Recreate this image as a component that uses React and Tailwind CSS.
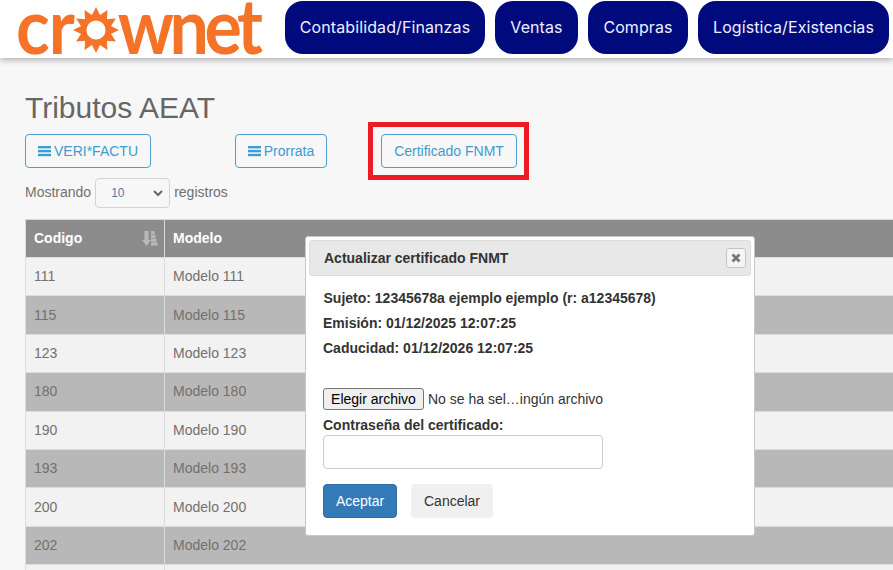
import React from "react";

const sans = { fontFamily: '"Liberation Sans", Arial, sans-serif' };

function Bars() {
  return (
    <svg width="13" height="12" viewBox="0 0 13 12" className="shrink-0">
      <rect x="0" y="1" width="13" height="2.4" fill="currentColor" />
      <rect x="0" y="4.9" width="13" height="2.4" fill="currentColor" />
      <rect x="0" y="8.8" width="13" height="2.4" fill="currentColor" />
    </svg>
  );
}

function Sun() {
  const rays = [];
  for (let i = 0; i < 12; i++) {
    rays.push(<polygon key={i} points="-5,-14 0,-24 5,-14" fill="#f47328" transform={`rotate(${i * 30})`} />);
  }
  return (
    <svg width="46" height="48" viewBox="-24 -25 48 50" className="shrink-0">
      {rays}
      <circle r="12.5" fill="none" stroke="#f47328" strokeWidth="5" />
    </svg>
  );
}

function SortIcon() {
  return (
    <svg width="16" height="15" viewBox="0 0 16 15">
      <path d="M2.500 0h4v9h2.500l-4.500 6L0 9h2.500z" fill="#b8b8b8" />
      <rect x="9" y="0" width="3.500" height="3.200" fill="#b8b8b8" />
      <rect x="9" y="3.800" width="4.500" height="3.200" fill="#b8b8b8" />
      <rect x="9" y="7.600" width="5.500" height="3.200" fill="#b8b8b8" />
      <rect x="9" y="11.400" width="6.500" height="3.200" fill="#b8b8b8" />
    </svg>
  );
}

const nav = [
  ["Contabilidad/Finanzas", "w-[200px]"],
  ["Ventas", "w-[83px]"],
  ["Compras", "w-[100px]"],
  ["Logística/Existencias", "w-[191px]"],
];

const rows = [
  ["111", "Modelo 111"],
  ["115", "Modelo 115"],
  ["123", "Modelo 123"],
  ["180", "Modelo 180"],
  ["190", "Modelo 190"],
  ["193", "Modelo 193"],
  ["200", "Modelo 200"],
  ["202", "Modelo 202"],
  ["", ""],
];

export default function App() {
  return (
    <div className="relative w-[893px] h-[570px] overflow-hidden bg-[#f7f7f7] text-[14px] text-[#73706e]" style={sans}>
      <header className="h-[58px] bg-white flex items-start shadow-[0_2px_6px_rgba(0,0,0,0.3)]">
        <div className="w-[285px] h-[58px] pl-[16px] flex items-start text-[#f47328] font-bold" style={{ fontFamily: 'Lato, sans-serif' }}>
          <span className="mt-[6px] text-[70px] leading-[40px] tracking-[-1px] scale-y-[1.09] origin-bottom">cr</span>
          <span className="mt-[6px] shrink-0 -ml-[1px] -mr-[1px]"><Sun /></span>
          <span className="mt-[6px] text-[70px] leading-[40px] tracking-[-4.5px] scale-y-[1.09] origin-bottom">wnet</span>
        </div>
        <nav className="flex gap-[10px] pt-[1px]">
          {nav.map(([t, w]) => (
            <div key={t} className={`${w} h-[53px] pb-[2px] rounded-[18px] bg-[#000a7d] text-[#eef0ff] flex items-center justify-center text-[16px] tracking-[0.1px] whitespace-nowrap`} style={{ fontFamily: 'Inter, sans-serif' }}>
              {t}
            </div>
          ))}
        </nav>
      </header>

      <main className="pl-[25px]">
        <h1 className="text-[30px] leading-[33px] text-[#666] mt-[33px] font-normal">Tributos AEAT</h1>
        <div className="flex mt-[10px] text-[#3f9ccf]">
          <button className="w-[126px] h-[34px] border border-[#4a9fd0] rounded-[4px] flex items-center justify-center gap-[3px]"><Bars />VERI*FACTU</button>
          <button className="ml-[84px] w-[92px] h-[34px] border border-[#4a9fd0] rounded-[4px] flex items-center justify-center gap-[3px]"><Bars />Prorrata</button>
          <button className="ml-[54px] w-[136px] h-[34px] border border-[#4a9fd0] rounded-[4px] flex items-center justify-center">Certificado FNMT</button>
        </div>
        <div className="flex items-center mt-[10px] h-[30px]">
          <span className="-mt-[1px]">Mostrando</span>
          <div className="ml-[4px] w-[75px] h-[30px] border border-[#d4d4d4] rounded-[4px] flex items-center justify-between pl-[15px] pr-[6px] text-[12px] text-[#4a80a8]">
            <span>10</span>
            <svg width="10" height="7" viewBox="0 0 10 7"><path d="M1 1l4 4 4-4" fill="none" stroke="#666" strokeWidth="2" /></svg>
          </div>
          <span className="ml-[4px] -mt-[1px]">registros</span>
        </div>
        <div className="mt-[11px] w-[868px]">
          <div className="h-[38px] bg-[#8c8c8c] border-t border-l border-[#d9d9d9] text-white font-bold flex">
            <div className="w-[139px] pl-[8px] pr-[6px] flex items-center justify-between border-r border-[#d9d9d9]">
              <span>Codigo</span><SortIcon />
            </div>
            <div className="pl-[8px] flex items-center">Modelo</div>
          </div>
          {rows.map(([a, b], i) => (
            <div key={i} className={`h-[38.4px] flex items-center border-l border-t border-[#dcdcdc] ${i % 2 ? "bg-[#b8b8b8]" : "bg-[#f2f2f2]"}`}>
              <div className="w-[139px] h-full pl-[8px] flex items-center border-r border-[#dcdcdc]">{a}</div>
              <div className="pl-[8px]">{b}</div>
            </div>
          ))}
        </div>
      </main>

      <div className="absolute left-[368px] top-[122px] w-[161px] h-[58px] border-[5px] border-[#ed1c24]"></div>

      <div className="absolute left-[305px] top-[236px] w-[450px] h-[300px] bg-white border border-[#c8c8c8] rounded-[3px] p-[3px] text-[#333]">
        <div className="h-[36px] bg-[#e8e8e8] border border-[#dddddd] rounded-[3px] flex items-center justify-between pl-[14px] pr-[4px] font-bold">
          <span>Actualizar certificado FNMT</span>
          <span className="w-[20px] h-[20px] bg-[#f4f4f4] border border-[#c4c4c4] rounded-[3px] flex items-center justify-center">
            <svg width="10" height="10" viewBox="0 0 10 10"><path d="M1.500 1.500l7 7M8.500 1.500l-7 7" stroke="#777" strokeWidth="2.800" /></svg>
          </span>
        </div>
        <div className="pl-[14px] pt-[10px] font-bold leading-[25px]">
          <div className="pl-[0.5px]">Sujeto: 12345678a ejemplo ejemplo (r: a12345678)</div>
          <div>Emisión: 01/12/2025 12:07:25</div>
          <div>Caducidad: 01/12/2026 12:07:25</div>
          <div className="mt-[27px] flex items-center h-[22px] font-normal text-[14px]">
            <span className="w-[101px] h-[22px] bg-[#efefef] border border-[#767676] rounded-[3px] flex items-center justify-center text-black">Elegir archivo</span>
            <span className="ml-[4px]">No se ha sel…ingún archivo</span>
          </div>
          <div className="mt-[5px] leading-[20px]">Contraseña del certificado:</div>
          <div className="w-[280px] h-[34px] bg-white border border-[#cccccc] rounded-[4px]"></div>
          <div className="mt-[15px] flex font-normal">
            <span className="w-[74px] h-[34px] bg-[#337ab7] border border-[#2e6da4] rounded-[4px] text-white flex items-center justify-center">Aceptar</span>
            <span className="ml-[14px] w-[82px] h-[34px] bg-[#f0f0f0] rounded-[4px] flex items-center justify-center">Cancelar</span>
          </div>
        </div>
      </div>
    </div>
  );
}
